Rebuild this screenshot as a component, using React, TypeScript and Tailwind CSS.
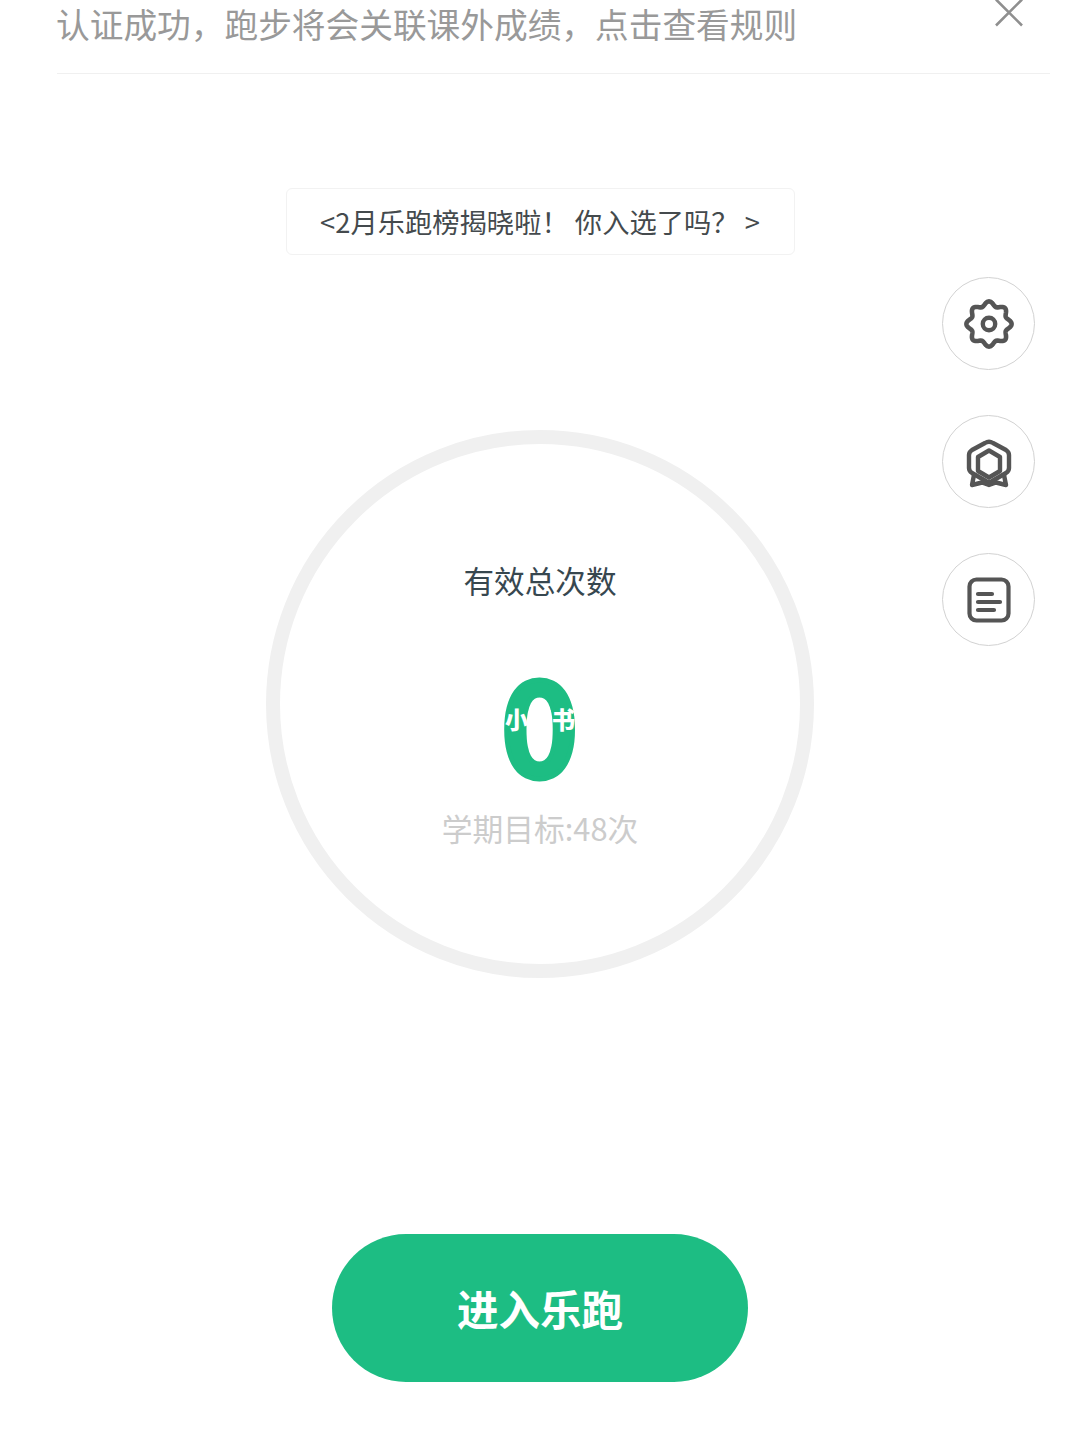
const gearPath = (() => {
  const pts: string[] = [];
  const n = 240;
  for (let i = 0; i < n; i++) {
    const t = (i / n) * Math.PI * 2;
    const r = 20.4 + 2.2 * Math.cos(8 * t);
    pts.push(`${(25 + r * Math.sin(t)).toFixed(2)} ${(25 - r * Math.cos(t)).toFixed(2)}`);
  }
  return `M${pts.join("L")}Z`;
})();

function CloseIcon() {
  return (
    <svg width="30" height="30" viewBox="0 0 30 30" fill="none" stroke="#8f8f8f" strokeWidth="2.6">
      <path d="M2 1.5 28 27.5M28 1.5 2 27.5" />
    </svg>
  );
}

function GearIcon() {
  return (
    <svg width="50" height="50" viewBox="0 0 50 50" fill="none" stroke="#555555" strokeWidth="4.6" strokeLinejoin="round">
      <path d={gearPath} />
      <circle cx="25" cy="25" r="6.2" strokeWidth="4.4" />
    </svg>
  );
}

function MedalIcon() {
  return (
    <svg width="50" height="54" viewBox="0 0 50 54" fill="none" stroke="#555555" strokeWidth="4.4" strokeLinejoin="round" strokeLinecap="round">
      <path d="M21 8Q25 5.5 29 8L42 15Q45 17 45 20V33Q45 36 42 38L29 45.5Q25 48 21 45.5L8 38Q5 36 5 33V20Q5 17 8 15Z" />
      <path d="M25 15.5 36 22V36L25 42.5 14 36V22Z" />
      <path d="M10 40 8 50 18 47.5 25 50 32 47.5 42 50 40 40" />
    </svg>
  );
}

function DocIcon() {
  return (
    <svg width="44" height="46" viewBox="0 0 44 46" fill="none" stroke="#555555" strokeWidth="4.2" strokeLinecap="round">
      <rect x="2.5" y="2.5" width="39" height="41" rx="7" />
      <path d="M11 17H25M11 25H33M11 33H27" />
    </svg>
  );
}

function RoundButton({ children }: { children: React.ReactNode }) {
  return (
    <div className="w-[93px] h-[93px] rounded-full border-[1.5px] border-[#d2d2d2] bg-white flex items-center justify-center">
      {children}
    </div>
  );
}

export default function App() {
  return (
    <div
      className="relative w-[1080px] h-[1439px] overflow-hidden bg-white flex flex-col items-center"
      style={{ fontFamily: '"Noto Sans CJK SC", "Noto Sans", sans-serif' }}
    >
      <header className="self-stretch ml-[57px] mr-[30px] h-[74px] border-b border-[#f0f0f0] flex items-start justify-between">
        <p className="text-[33.7px] leading-[48px] -ml-px text-[#999999] whitespace-nowrap">
          认证成功，跑步将会关联课外成绩，点击查看规则
        </p>
        <div className="mr-[26px] -mt-[2px]">
          <CloseIcon />
        </div>
      </header>

      <div className="mt-[114px] w-[509px] h-[67px] border border-[#f2f2f2] rounded-md flex items-center justify-center text-[27.3px] text-[#444a4d] whitespace-nowrap">
        &lt;2月乐跑榜揭晓啦！ 你入选了吗？ &gt;
      </div>

      <div className="mt-[175px] w-[548px] h-[548px] rounded-full border-[14px] border-[#f0f0f0] flex flex-col items-center shrink-0">
        <p className="mt-[113px] text-[30.6px] leading-[46px] text-[#37474f] whitespace-nowrap">有效总次数</p>
        <div className="relative mt-[52px] h-[144px]">
          <span
            className="block text-[133px] leading-[144px] font-black text-[#1dbd83] scale-x-[0.93] [-webkit-text-stroke:5px_#1dbd83]"
            style={{ fontFamily: "Lato, sans-serif" }}
          >
            0
          </span>
          <span className="absolute left-1/2 top-[49px] -translate-x-1/2 text-[23.3px] leading-[30px] font-black text-white whitespace-nowrap">
            小红书
          </span>
        </div>
        <p className="mt-[7px] text-[30.8px] leading-[44px] text-[#cccccc] whitespace-nowrap">学期目标:48次</p>
      </div>

      <button className="mt-[256px] w-[416px] h-[148px] rounded-full bg-[#1dbd83] text-[41.5px] font-bold text-white shrink-0">
        进入乐跑
      </button>

      <div className="absolute left-[942px] top-[277px] flex flex-col gap-[45px]">
        <RoundButton><GearIcon /></RoundButton>
        <RoundButton><MedalIcon /></RoundButton>
        <RoundButton><DocIcon /></RoundButton>
      </div>
    </div>
  );
}
